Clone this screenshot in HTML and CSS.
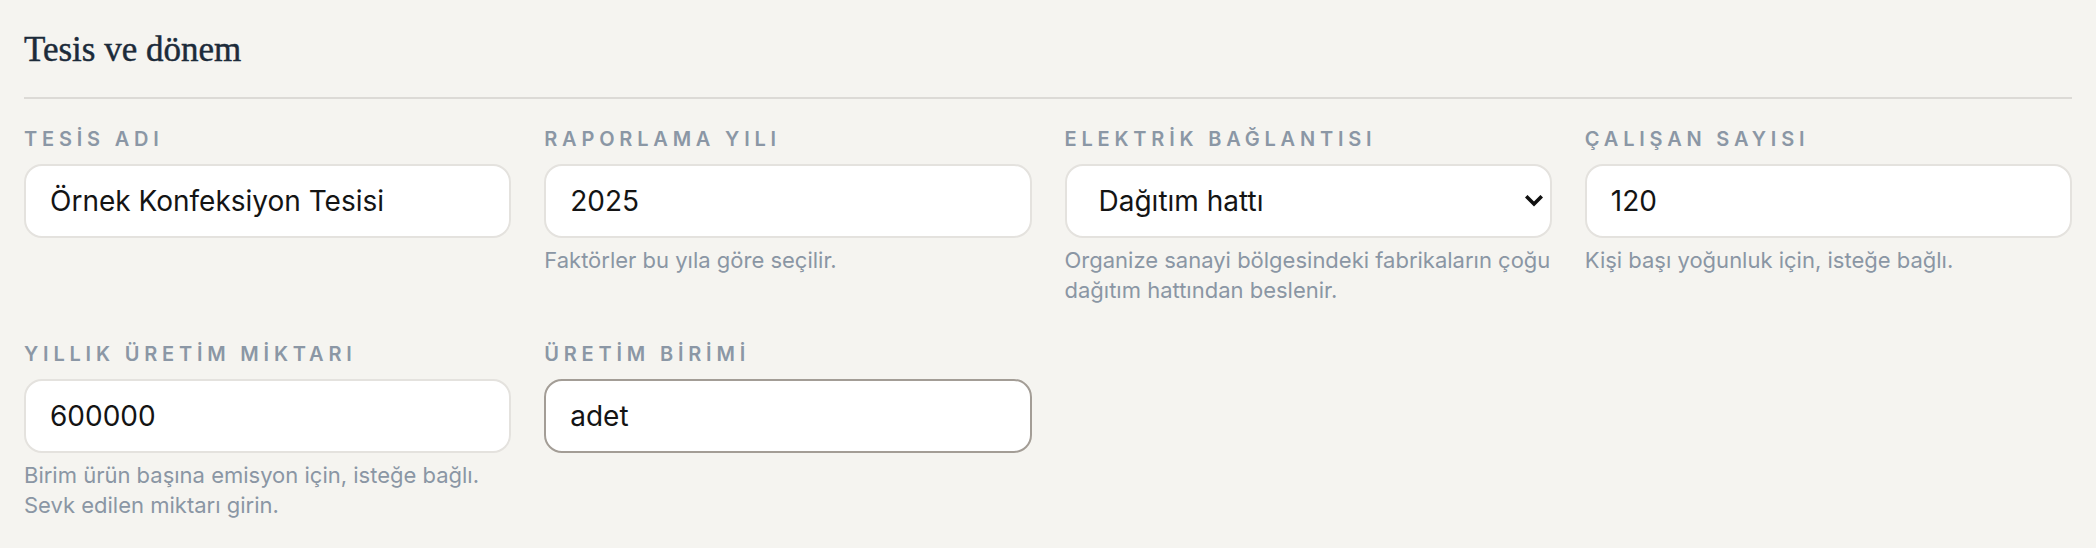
FILE: index.html
```html
<!DOCTYPE html>
<html lang="tr">
<head>
  <meta charset="UTF-8">
  <meta name="viewport" content="width=device-width, initial-scale=1.0">
  <title>Tesis ve dönem</title>
  <link rel="stylesheet" href="styles.css">
</head>
<body>
  <section class="panel">
    <h2 class="panel-title">Tesis ve dönem</h2>

    <div class="fields">
      <div class="field">
        <label for="facility">Tesis adı</label>
        <input id="facility" type="text" value="Örnek Konfeksiyon Tesisi">
      </div>

      <div class="field">
        <label for="year">Raporlama yılı</label>
        <input id="year" type="text" value="2025">
        <p class="hint">Faktörler bu yıla göre seçilir.</p>
      </div>

      <div class="field">
        <label for="grid">Elektrik bağlantısı</label>
        <div class="select-wrap">
          <select id="grid">
            <option>Dağıtım hattı</option>
            <option>İletim hattı</option>
          </select>
          <svg class="chevron" width="18" height="12" viewBox="0 0 18 12">
            <path d="M2.5 2.5 L9 9 L15.5 2.5" fill="none" stroke="#111" stroke-width="3.6" stroke-linecap="square"/>
          </svg>
        </div>
        <p class="hint">Organize sanayi bölgesindeki fabrikaların çoğu dağıtım hattından beslenir.</p>
      </div>

      <div class="field">
        <label for="staff">Çalışan sayısı</label>
        <input id="staff" type="text" value="120">
        <p class="hint">Kişi başı yoğunluk için, isteğe bağlı.</p>
      </div>

      <div class="field">
        <label for="output">Yıllık üretim miktarı</label>
        <input id="output" type="text" value="600000">
        <p class="hint">Birim ürün başına emisyon için, isteğe bağlı. Sevk edilen miktarı girin.</p>
      </div>

      <div class="field">
        <label for="unit">Üretim birimi</label>
        <input id="unit" class="active" type="text" value="adet">
      </div>
    </div>
  </section>
</body>
</html>
```

FILE: styles.css
```css
body {
  margin: 0;
  padding: 0;
  background-color: #f5f4f0;
  font-family: Inter, "Noto Sans", sans-serif;
}

.panel {
  padding: 30px 24px 24px;
}

.panel-title {
  margin: 0;
  padding-bottom: 27px;
  border-bottom: 2px solid #dcdad6;
  font-family: "Liberation Serif", serif;
  font-size: 35px;
  font-weight: normal;
  line-height: 40px;
  color: #1c2b3a;
  -webkit-text-stroke: 0.45px #1c2b3a;
}

.fields {
  display: grid;
  grid-template-columns: repeat(4, 1fr);
  column-gap: 33px;
  row-gap: 37px;
  margin-top: 28px;
}

.field {
  display: flex;
  flex-direction: column;
  min-width: 0;
}

.field label {
  display: block;
  margin-bottom: 13px;
  font-size: 20px;
  font-weight: 600;
  line-height: 24px;
  letter-spacing: 0.24em;
  text-transform: uppercase;
  color: #8b97a5;
}

.field input,
.field select {
  box-sizing: border-box;
  width: 100%;
  height: 74px;
  margin: 0;
  padding: 0 24px;
  border: 2px solid #e4e2de;
  border-radius: 18px;
  background: #fff;
  font-family: Inter, "Noto Sans", sans-serif;
  font-size: 28px;
  color: #141414;
  outline: none;
}

.field input.active {
  border-color: #a39d96;
}

.select-wrap {
  position: relative;
}

.field select {
  appearance: none;
  -webkit-appearance: none;
  padding-left: 32px;
}

.chevron {
  position: absolute;
  right: 9px;
  top: 31px;
  pointer-events: none;
}

.hint {
  margin: 8px 0 0;
  font-size: 22px;
  line-height: 29.5px;
  color: #8a96a4;
}
```
